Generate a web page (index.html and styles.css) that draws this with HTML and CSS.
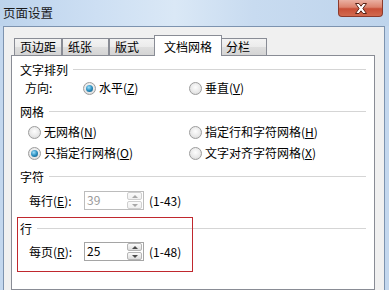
FILE: index.html
```html
<!DOCTYPE html>
<html lang="zh-CN">
<head>
    <meta charset="UTF-8">
    <meta name="viewport" content="width=device-width, initial-scale=1.0">
    <title>页面设置</title>
    <link rel="stylesheet" href="styles.css">
</head>
<body>
    <div class="window">
        <div class="titlebar">
            <span class="title">页面设置</span>
            <div class="close-btn">
                <svg width="14" height="11" viewBox="0 0 14 11">
                    <path d="M1.5 0.5 L5 0.5 L7 3.2 L9 0.5 L12.5 0.5 L8.9 5.5 L12.5 10.5 L9 10.5 L7 7.8 L5 10.5 L1.5 10.5 L5.1 5.5 Z" fill="#fff" stroke="#5a2418" stroke-width="1" stroke-linejoin="round"/>
                </svg>
            </div>
        </div>

        <div class="client">
            <div class="tabs">
                <div class="tab">页边距</div>
                <div class="tab">纸张</div>
                <div class="tab">版式</div>
                <div class="tab active">文档网格</div>
                <div class="tab">分栏</div>
            </div>

            <div class="panel">
                <div class="section">
                    <div class="section-title">文字排列</div>
                    <div class="dir-row">
                        <span class="dir-label">方向:</span>
                        <span class="option dir-option"><span class="radio checked"></span>水平(<u>Z</u>)</span>
                        <span class="option"><span class="radio"></span>垂直(<u>V</u>)</span>
                    </div>
                </div>

                <div class="section">
                    <div class="section-title">网格</div>
                    <div class="grid-row first">
                        <span class="option grid-option"><span class="radio"></span>无网格(<u>N</u>)</span>
                        <span class="option"><span class="radio"></span>指定行和字符网格(<u>H</u>)</span>
                    </div>
                    <div class="grid-row">
                        <span class="option grid-option"><span class="radio checked"></span>只指定行网格(<u>O</u>)</span>
                        <span class="option"><span class="radio"></span>文字对齐字符网格(<u>X</u>)</span>
                    </div>
                </div>

                <div class="section">
                    <div class="section-title">字符</div>
                    <div class="spin-row">
                        <span class="spin-label">每行(<u>E</u>):</span>
                        <div class="spin-box disabled">
                            <span class="spin-value">39</span>
                            <div class="spin-buttons">
                                <span class="spin-btn up"></span>
                                <span class="spin-btn down"></span>
                            </div>
                        </div>
                        <span class="spin-range">(1-43)</span>
                    </div>
                </div>

                <div class="section lines">
                    <div class="section-title">行</div>
                    <div class="spin-row">
                        <span class="spin-label">每页(<u>R</u>):</span>
                        <div class="spin-box">
                            <span class="spin-value">25</span>
                            <div class="spin-buttons">
                                <span class="spin-btn up"></span>
                                <span class="spin-btn down"></span>
                            </div>
                        </div>
                        <span class="spin-range">(1-48)</span>
                    </div>
                </div>

                <!-- red annotation box around the 行 group -->
                <div class="highlight"></div>
            </div>
        </div>
    </div>
</body>
</html>
```

FILE: styles.css
```css
* {
    margin: 0;
    padding: 0;
    box-sizing: border-box;
    font-family: "Noto Sans CJK SC", "Liberation Sans", sans-serif;
}

body {
    width: 389px;
    height: 290px;
    overflow: hidden;
    font-size: 12px;
    color: #000;
}

.window {
    height: 290px;
    display: flex;
    flex-direction: column;
    background: #c3d7ee;
}

.titlebar {
    height: 26px;
    display: flex;
    align-items: flex-start;
    background: linear-gradient(90deg, #bcd3ec 0%, #cddff3 25%, #dae8f6 45%, #c8dbf0 65%, #bed4ec 100%);
}

.title {
    padding: 5px 0 0 3px;
    font-size: 12.5px;
    line-height: 16px;
    color: #1a1a1a;
}

.close-btn {
    margin-left: auto;
    margin-right: 6px;
    width: 45px;
    height: 17px;
    border: 1px solid #8c3a2c;
    border-top: none;
    border-radius: 0 0 4px 4px;
    background: linear-gradient(180deg, #eab0a2 0%, #dc826d 45%, #c84f37 55%, #d26a4f 100%);
    display: flex;
    align-items: center;
    justify-content: center;
}

.client {
    flex: 1;
    margin: 0 4px 0 3px;
    background: #f0f0f0;
    border: 1px solid #7d93af;
    border-bottom: none;
    padding: 8px 9px 0 7px;
    display: flex;
    flex-direction: column;
}

.tabs {
    height: 20px;
    display: flex;
    align-items: flex-end;
    padding-left: 3px;
}

.tab {
    height: 17px;
    min-width: 47px;
    padding: 0 5px;
    line-height: 16px;
    border: 1px solid #898c95;
    border-bottom: none;
    background: linear-gradient(180deg, #f3f3f3 0%, #ebebeb 50%, #dedede 51%, #d4d4d4 100%);
    white-space: nowrap;
}

.tab.active {
    height: 21px;
    margin: 0 -2px -1px;
    padding: 3px 9px 0;
    background: #fff;
    position: relative;
    z-index: 1;
}

.panel {
    flex: 1;
    position: relative;
    background: #fff;
    border: 1px solid #898c95;
    padding: 0 8px;
}

.section {
    margin-top: 6px;
}

.section.lines {
    margin-top: 11px;
}

.section-title {
    height: 16px;
    line-height: 16px;
    display: flex;
    align-items: center;
}

.section-title::after {
    content: "";
    flex: 1;
    margin: 0 0 1px 5px;
    border-top: 1px solid #d5d5d5;
}

.option {
    display: flex;
    align-items: center;
    line-height: 16px;
    white-space: nowrap;
}

.radio {
    width: 13px;
    height: 13px;
    margin-right: 3px;
    border-radius: 50%;
    border: 1px solid #9c9c9c;
    background: radial-gradient(circle at 50% 40%, #fdfdfd 0%, #e9e9e9 55%, #d2d2d2 100%);
    display: flex;
    align-items: center;
    justify-content: center;
}

.radio.checked::after {
    content: "";
    width: 7px;
    height: 7px;
    border-radius: 50%;
    background: radial-gradient(circle at 40% 35%, #9fe0fb 0%, #2b8fc0 50%, #0f4f75 100%);
}

.dir-row {
    height: 20px;
    display: flex;
    align-items: center;
    padding-left: 5px;
}

.dir-label {
    width: 58px;
    line-height: 16px;
}

.dir-option {
    width: 106px;
}

.grid-row {
    height: 20px;
    margin-top: 1px;
    display: flex;
    align-items: center;
    padding-left: 8px;
}

.grid-row.first {
    margin-top: 2px;
}

.grid-option {
    width: 161px;
}

.spin-row {
    height: 19px;
    margin-top: 6px;
    display: flex;
    align-items: center;
    padding-left: 9px;
}

.section.lines .spin-row {
    margin-top: 5px;
}

.spin-label {
    width: 55px;
    line-height: 16px;
    white-space: nowrap;
}

.spin-box {
    width: 60px;
    height: 19px;
    display: flex;
    border: 1px solid #a5a5a5;
    background: #fff;
}

.spin-value {
    flex: 1;
    padding-left: 2px;
    line-height: 16px;
}

.spin-buttons {
    width: 16px;
    display: flex;
    flex-direction: column;
    gap: 1px;
    padding: 0 1px 0 0;
}

.spin-btn {
    flex: 1;
    border: 1px solid #b5b5b5;
    border-radius: 2px;
    background: linear-gradient(180deg, #fbfbfb 0%, #ececec 50%, #dcdcdc 100%);
    display: flex;
    align-items: center;
    justify-content: center;
}

.spin-btn::after {
    content: "";
    border-left: 3px solid transparent;
    border-right: 3px solid transparent;
}

.spin-btn.up::after {
    border-bottom: 3px solid #4a4a4a;
}

.spin-btn.down::after {
    border-top: 3px solid #4a4a4a;
}

.spin-box.disabled {
    border-color: #bcbcbc;
}

.spin-box.disabled .spin-value {
    color: #9a9a9a;
}

.spin-box.disabled .spin-btn {
    border-color: #cfcfcf;
    background: linear-gradient(180deg, #fafafa 0%, #f0f0f0 100%);
}

.spin-box.disabled .spin-btn.up::after { border-bottom-color: #a8a8a8; }
.spin-box.disabled .spin-btn.down::after { border-top-color: #a8a8a8; }

.spin-range {
    margin-left: 5px;
    line-height: 16px;
}

.highlight {
    position: absolute;
    left: 5px;
    top: 161px;
    width: 176px;
    height: 55px;
    border: 1px solid #c0282e;
    pointer-events: none;
}
```
